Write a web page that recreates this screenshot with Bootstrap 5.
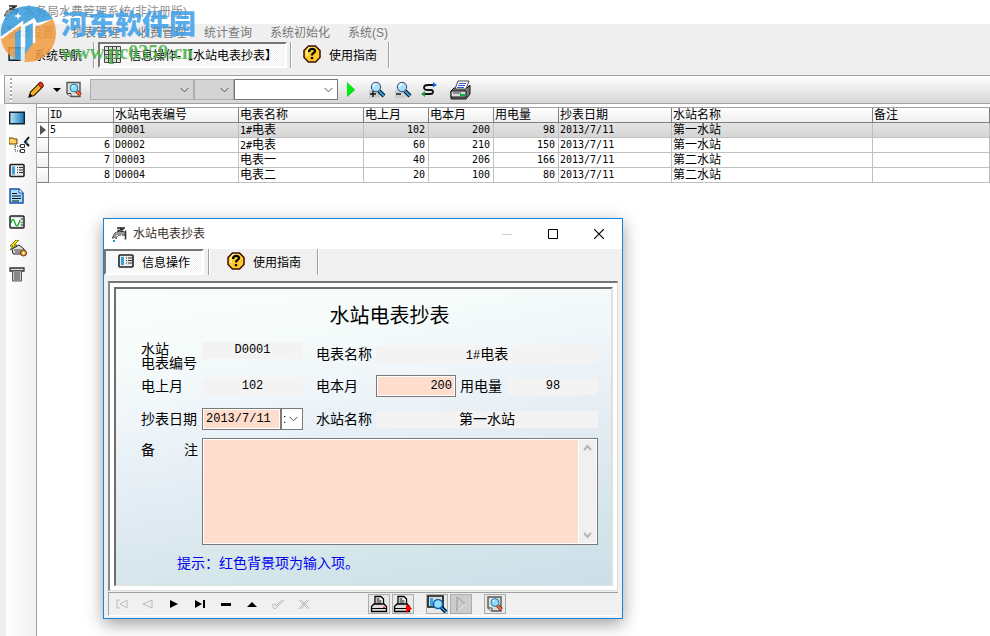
<!DOCTYPE html>
<html lang="zh-CN">
<head>
<meta charset="utf-8">
<meta name="viewport" content="width=device-width, initial-scale=1">
<title>水务局水费管理系统(非注册版)</title>
<link rel="stylesheet" href="https://cdn.jsdelivr.net/npm/bootstrap@5.3.0/dist/css/bootstrap.min.css">
<style>
body{font:12px/14px "Liberation Sans","Noto Sans CJK SC",sans-serif;color:#000;background:#fff;min-height:100vh;overflow:hidden}
button{font:inherit;color:inherit;background:none;border:0;padding:0}
svg{display:block;flex:none}
.num{font-family:"DejaVu Sans Mono","Noto Sans CJK SC",monospace;font-size:10px}
.titlebar{height:24px;padding:0 4px;gap:3px;color:#8f8f8f}
.menubar{height:18px;background:#efefef;padding-left:6px;gap:18px}
.menubar a{color:#777;text-decoration:none}
.tabs{height:33px;background:#efefef;gap:3px}
.tabs button,.dtabs button{height:26px;padding-top:2px;white-space:nowrap}
.vline{width:2px;height:26px;background:#a0a0a0;border-right:1px solid #fff}
.pressed{background:repeating-conic-gradient(#fff 0 25%,#f0f0f0 0 50%) 0 0/2px 2px;border-top:2px solid #777!important;border-left:2px solid #777!important;border-right:2px solid #fff!important;border-bottom:2px solid #fff!important}
.toolbar{height:29px;border-top:1px solid #a0a0a0;border-bottom:1px solid #a0a0a0;background:linear-gradient(#fff,#d6d6d6);margin-left:4px;padding-left:5px;border-left:1px solid #a0a0a0}
.grip{width:2px;height:24px;background:repeating-linear-gradient(#aaa 0 2px,#fff 2px 4px)}
.combo{height:21px;border:1px solid #adadad;border-radius:0;background:#d4d4d4 url("data:image/svg+xml,%3Csvg xmlns='http://www.w3.org/2000/svg' width='9' height='6'%3E%3Cpath d='M.5.8 4.5 4.8 8.5.8' fill='none' stroke='%23555'/%3E%3C/svg%3E") no-repeat right 4px center/9px 6px;padding:0;font-size:12px;appearance:none}
.combo-long{width:104px}.combo-short{width:40px}
.combo-on{background-color:#fff;border-color:#777}
.shell{background:#efefef;padding-left:6px;min-height:532px}
.side{flex:none;width:30px;background:linear-gradient(90deg,#fff,#f1f1f1);padding:6px 3px;gap:10px}
.side button{height:16px}
.gridpane{min-width:0;background:#fff;border-left:1px solid #a0a0a0;padding-top:3px}
.records{table-layout:fixed;border-collapse:separate;border-spacing:0;width:100%;line-height:14px;border-top:1px solid #a0a0a0}
.records th,.records td{padding:0 1px;height:15px;vertical-align:middle;font-weight:400;border-right:1px solid #c0c0c0;border-bottom:1px solid #c0c0c0;white-space:nowrap;overflow:hidden}
.records span.num{line-height:10px}
.records th{background:linear-gradient(#fff,#efefef);border-color:#808080}
.records td:first-child{background:linear-gradient(#fff,#efefef);border-color:#808080}
.records .r{text-align:right;padding-right:3px}
.records .current td{background:linear-gradient(#e4e4e4,#d5d5d5)}
.records .current td:nth-child(-n+2){background:#fff}
.c-mark{width:12px}.c-n{width:65px}.c-name{width:125px}.c-date{width:113px}.c-site{width:201px}
/* floating window */
.win{position:absolute;left:103px;top:218px;width:520px;border:1px solid #1883d7;background:#f0f0f0;box-shadow:0 5px 16px rgba(0,0,0,.38)}
.win-title{height:30px;background:#fff;padding-left:8px;gap:5px;color:#3b2f2a}
.win-title button{width:46px;height:28px}
.dtabs{height:32px}
.guide{margin-left:-3px}
.frame{margin:0 4px;background:#fff;border-top:2px solid #777;border-left:2px solid #888;border-right:1px solid #ddd;border-bottom:1px solid #ddd;padding:4px}
.sheet{border-top:2px solid #6e6e6e;border-left:2px solid #6e6e6e;border-right:2px solid #e0e0e0;border-bottom:1px solid #e0e0e0;background:linear-gradient(170deg,#f9fefb,#f6fcfa 18%,#eff5f9 36%,#e2ecf3 58%,#d5e6ea 80%,#cbdfe9);padding:15px 13px 14px 25px;font-size:14px;line-height:16px}
.sheet h1{font-size:20px;line-height:24px;font-weight:400;margin:0 0 14px;padding-left:40px}
.line{display:grid;grid-template-columns:61px 101px 13px 60px 1fr;align-items:center;min-height:22px}
.line label{white-space:nowrap}
.line-top{align-items:start;min-height:29px}
.line-date{margin-top:11px}
.stacked{line-height:14px}
.plate{height:17px;line-height:17px;background:#f3f3f3;text-align:center}
.f-num{font-family:"Liberation Mono","Noto Sans CJK SC",monospace;font-size:12px}
.entry{height:22px;border:1px solid #7a7a7a;border-radius:0;background:#ffddcc;box-shadow:inset 0 0 0 1px #fff;padding:0 3px;color:#000;min-width:0}
.entry-qty{width:80px}.plate-use{width:90px}
.combo-date{width:22px;height:22px;background-color:#fff;background-position:right 4px center;border-color:#7a7a7a;padding-left:1px}
.memo{grid-column:2/-1;height:107px;border:1px solid #7a7a7a;background:#fff;padding:1px}
.memo textarea{border:0;resize:none;background:#ffddcc;outline:0;overflow:hidden}
.memo-scroll{width:17px;background:#f0f0f0;margin-left:1px}
.tip{color:#0000f0;margin:10px 0 0 36px}
.navbar-db{margin:1px 4px 2px;height:24px;border-top:1px solid #a0a0a0;border-left:1px solid #a0a0a0;border-bottom:1px solid #fff}
.navbar-db .nb{width:26px;height:20px}
.navbar-db .tb{width:22px;height:20px;border:1px solid #adadad;background:#e9e9e9}
.navbar-db .dead{background:#ccc}
.tb-group{gap:2px}
.tb-first{margin-left:51px}
/* site badge laid over the window's corner */
.brand{position:absolute;left:0;top:5px;pointer-events:none}
.brand-cn{font:900 27px/28px "Noto Sans CJK SC",sans-serif;color:#3d9fe8;opacity:.85;white-space:nowrap}
.brand-url{font:bold 20px/22px "Liberation Serif",serif;color:#4fb04f;opacity:.88;margin-top:4px}
</style>
<script src="https://cdn.jsdelivr.net/npm/bootstrap@5.3.0/dist/js/bootstrap.bundle.min.js"></script>
</head>
<body>
<svg class="position-absolute" width="0" height="0" xmlns="http://www.w3.org/2000/svg" aria-hidden="true">
<defs><linearGradient id="sg"><stop stop-color="#bfe6f7"/><stop offset="1" stop-color="#1178b4"/></linearGradient></defs>
<symbol id="tap" viewBox="0 0 16 16"><path d="M5 1.500h8M9 2v4M5.500 4l6-1" stroke="#222" stroke-width="1.600" fill="none"/><path d="M2 12c.5-4 2-5.500 6-5.500h5" stroke="#999" stroke-width="3" fill="none"/><path d="M.7 12c.5-5 3-7 7-7h5M4 12.500C4.500 9.500 6 8.500 9 8.500h4" stroke="#222" fill="none" stroke-dasharray="3 1"/><path d="M13.500 4v9" stroke="#333" stroke-width="1.600"/><path d="M2 13.500v2" stroke="#39b" stroke-width="2"/></symbol>
<symbol id="help" viewBox="0 0 18 18"><path d="M5.500 1h7L17 5.500v7L12.500 17h-7L1 12.500v-7z" fill="#ffc72e" stroke="#3a1005" stroke-width="1.500"/><path d="M4 11V6l2-3h5" stroke="#fff3a0" stroke-width="1.500" fill="none"/><path d="M6 7c0-4 6-4 6-1 0 2-3 2-3 4.500" stroke="#000" stroke-width="2.200" fill="none"/><path d="M7.800 12h2.400v2.200H7.800z"/></symbol>
<symbol id="form" viewBox="0 0 16 14"><rect x="1" y="1" width="14" height="12" rx="1" fill="#e8e8e8" stroke="#222" stroke-width="1.600"/><path d="M3 3h3v8H3z" fill="#3b9fe0"/><path d="M8 4h1m1 0h4M8 6.500h1m1 0h4M8 9h1m1 0h4" stroke="#333"/><path d="M7 2v10" stroke="#fff"/></symbol>
<symbol id="screen" viewBox="0 0 16 13"><path d="M.7.700h14.600v11.600H.7z" fill="url(#sg)" stroke="#123" stroke-width="1.400"/></symbol>
<symbol id="lens" viewBox="0 0 18 18"><path d="m11 10 5 5" stroke="#012" stroke-width="4"/><path d="m11 10 5 5" stroke="#29a4df" stroke-width="2"/><circle cx="8" cy="6" r="4.700" fill="#a5e2fa" stroke="#347"/><path d="M5.500 6c0-2 1-3 3-3" stroke="#fff" stroke-width="1.500" fill="none"/></symbol>
<symbol id="preview" viewBox="0 0 16 17"><path d="M1 1h13v14H5l-4-3z" fill="#dce0dc" stroke="#555" stroke-width="1.400"/><path d="M1 12h4v3" fill="#fff" stroke="#444"/><path d="m10 9 4.500 4.500" stroke="#6b1b0a" stroke-width="3.600"/><path d="m10 9 4.500 4.500" stroke="#ff7034" stroke-width="2"/><circle cx="8" cy="6.500" r="3.900" fill="#8ddcfa" stroke="#2779a5"/><path d="M6 6q0-2 2-2" stroke="#fff" fill="none"/></symbol>
<symbol id="print-s" viewBox="0 0 18 18"><path d="M5 9V1.500h6L13.500 4v5" fill="#fff" stroke="#000" stroke-width="1.300"/><path d="M6.500 4h3m-3 2h5m-5 2h5" stroke="#000"/><path d="M1.500 11.500 4 9h10l2.500 2.500v5h-15z" fill="#ddd" stroke="#000" stroke-width="1.300"/><path d="M1.500 13.500h15" stroke="#000"/><path d="M13 12.300h2" stroke="red"/></symbol>
</svg>

<header class="titlebar d-flex align-items-center"><svg width="16" height="17"><use href="#tap"/></svg><span>水务局水费管理系统(非注册版)</span></header>
<nav class="menubar d-flex align-items-center" aria-label="主菜单"><a href="#">基础设置</a><a href="#">抄表管理</a><a href="#">收费管理</a><a href="#">统计查询</a><a href="#">系统初始化</a><a href="#">系统(S)</a></nav>
<div class="tabs d-flex align-items-start">
 <button class="d-flex align-items-center ps-2 pe-2"><svg class="me-2 mb-1" width="18" height="14"><use href="#screen"/></svg>系统导航</button>
 <span class="vline"></span>
 <button class="pressed d-flex align-items-center px-1"><svg class="me-2 mb-1" width="17" height="17" viewBox="0 0 17 17"><path d="M.500.500h16v16H.5zM4.500 0v17M8.500 0v17M12.500 0v17M0 4.500h17M0 8.500h17M0 12.500h17" fill="#ddd" stroke="#444"/></svg><span class="pe-1">信息操作-【水站电表抄表】</span></button>
 <span class="vline"></span>
 <button class="d-flex align-items-center ps-2 pe-2"><svg class="me-2 mb-1" width="18" height="18"><use href="#help"/></svg>使用指南</button>
 <span class="vline"></span>
</div>
<div class="toolbar d-flex align-items-center">
 <span class="grip me-3"></span>
 <button aria-label="编辑"><svg width="16" height="17" viewBox="0 0 16 17"><path d="M1 16 2.500 11 11 2.500 14.500 6 6 14.500z" fill="#ffc02d" stroke="#3b1b00" stroke-width="1.200"/><path d="m4 13 8-8" stroke="#e08a10"/><path d="m10 3 2-2q3 0 3.500 4l-2 2z" fill="#e6391c" stroke="#611"/><path d="m1 16 1.200-3.500L4.500 15z"/></svg></button>
 <button class="ms-2 me-1" aria-label="更多"><svg width="10" height="6"><path d="M1 1h8L5 5z"/></svg></button>
 <button class="me-2" aria-label="预览"><svg width="16" height="18"><use href="#preview"/></svg></button>
 <select class="combo combo-long" aria-label="字段"><option></option></select><select class="combo combo-short" aria-label="条件"><option></option></select><select class="combo combo-long combo-on" aria-label="值"><option></option></select>
 <button class="ms-2 me-2" aria-label="执行"><svg width="10" height="15"><path d="M1 0v15l8-7z" fill="#00cc10"/><path d="M1 1v13l8-6.500z" fill="#00ee10"/></svg></button>
 <button class="ms-1 me-2" aria-label="放大"><svg width="18" height="18"><path d="M1 9h11v8H1z" fill="#ccc"/><path d="M2 13h6M5 10v6" stroke="#111" stroke-width="1.400"/><use href="#lens"/></svg></button>
 <button class="me-2" aria-label="缩小"><svg width="18" height="18"><path d="M1 9h11v8H1z" fill="#ccc"/><path d="M2 13h5" stroke="#111" stroke-width="1.400"/><use href="#lens"/></svg></button>
 <button class="me-2" aria-label="刷新"><svg width="18" height="16" viewBox="0 0 18 16"><path d="M14 3H8Q4 3 4 5.500T8 8h3q2 0 2 2t-3 2H4" stroke="#111" stroke-width="1.800" fill="none"/><path d="M13 0v5.500L17 3z" fill="#176de4"/><path d="M5 9v6L1 12z" fill="#14a33a"/></svg></button>
 <button class="ms-1" aria-label="打印"><svg width="22" height="20" viewBox="0 0 22 20"><path d="m1 11 3-3h13l3-3v9l-4 5H1z" fill="#777" stroke="#111"/><path d="M5 9 8 1h11l-3 8z" fill="#fff" stroke="#444"/><path d="M9 3.500h7M8 5.500h7M7 7.500h7" stroke="#2e52dc"/><path d="M1 11h15v6H1z" fill="#d9d9d9" stroke="#111"/><path d="M3 13h8" stroke="#444"/><path d="M10 15h5" stroke="#0b3" stroke-width="2"/></svg></button>
</div>

<main class="shell d-flex">
 <aside class="side d-flex flex-column align-items-start" aria-label="快捷栏">
  <button aria-label="桌面"><svg width="16" height="14"><use href="#screen"/></svg></button>
  <button aria-label="结构"><svg width="21" height="17" viewBox="0 0 21 17"><path d="M0 2h4l1 1h3v5H0z" fill="#ffd261" stroke="#6b4300"/><path d="M6 9v6h5M6 10h5" stroke="#333" stroke-dasharray="1 1" fill="none"/><path d="M11.500 8.500h4v3h-4zM11.500 13.500h4v3h-4z" fill="#fff" stroke="#333"/><path d="m20 1-4 5 4 4" stroke="#111" stroke-width="2" fill="none"/><path d="M18 4v4" stroke="#2ac"/></svg></button>
  <button aria-label="表单"><svg width="16" height="15"><use href="#form"/></svg></button>
  <button aria-label="文档"><svg width="15" height="16" viewBox="0 0 15 16"><path d="M1 1h9l4 4v10H1z" fill="#a2ddff" stroke="#1753a0" stroke-width="1.500"/><path d="M10 1v4h4" fill="#fff" stroke="#1753a0"/><path d="M3 5.500h5M3 8h9M3 10.500h9M3 13h7" stroke="#111" stroke-width="1.200"/></svg></button>
  <button aria-label="曲线"><svg width="16" height="14" viewBox="0 0 16 14"><rect x="1" y="1" width="14" height="12" rx="1" fill="#ddd" stroke="#222" stroke-width="1.500"/><path d="M2 3h9v8H2z" fill="#fff"/><path d="M2 8q2-7 4 0t5-3" stroke="#08b020" stroke-width="1.300" fill="none"/><path d="M13 3v2m0 2v1m0 1v2" stroke="#333"/></svg></button>
  <button aria-label="设备"><svg width="19" height="17" viewBox="0 0 19 17"><path d="m3 9 7-4 5 4v5H4z" fill="#ddd" stroke="#222"/><path d="M5 10h8M6 12h6" stroke="#444"/><path d="M7 0 1 6h3L1 10l7-5H5l5-5z" fill="#ffe600" stroke="#443900" stroke-width=".7"/><circle cx="14.500" cy="13" r="3" fill="#eca33c" stroke="#5e3500"/><circle cx="14.500" cy="13" r="1" fill="#fff"/></svg></button>
  <button aria-label="报表"><svg width="16" height="15" viewBox="0 0 16 15"><path d="M1 1h14v3H1z" fill="#ddd" stroke="#333" stroke-width="1.300"/><path d="M3.500 4h9v10h-9z" fill="#ccc" stroke="#555"/><path d="M5 6h6M5 8h6M5 10h6M5 12h6" stroke="#444"/></svg></button>
 </aside>
 <section class="gridpane flex-grow-1 overflow-hidden">
  <table class="records">
   <colgroup><col class="c-mark"><col class="c-n"><col class="c-name"><col class="c-name"><col class="c-n"><col class="c-n"><col class="c-n"><col class="c-date"><col class="c-site"><col></colgroup>
   <thead><tr><th></th><th class="num">ID</th><th>水站电表编号</th><th>电表名称</th><th>电上月</th><th>电本月</th><th>用电量</th><th>抄表日期</th><th>水站名称</th><th>备注</th></tr></thead>
   <tbody>
    <tr class="current"><td><svg width="9" height="10"><path d="M2 0v10l6-5z" fill="#555"/></svg></td><td class="num">5</td><td class="num">D0001</td><td><span class="num">1#</span>电表</td><td class="num r">102</td><td class="num r">200</td><td class="num r">98</td><td class="num">2013/7/11</td><td>第一水站</td><td></td></tr>
    <tr><td></td><td class="num r">6</td><td class="num">D0002</td><td><span class="num">2#</span>电表</td><td class="num r">60</td><td class="num r">210</td><td class="num r">150</td><td class="num">2013/7/11</td><td>第一水站</td><td></td></tr>
    <tr><td></td><td class="num r">7</td><td class="num">D0003</td><td>电表一</td><td class="num r">40</td><td class="num r">206</td><td class="num r">166</td><td class="num">2013/7/11</td><td>第二水站</td><td></td></tr>
    <tr><td></td><td class="num r">8</td><td class="num">D0004</td><td>电表二</td><td class="num r">20</td><td class="num r">100</td><td class="num r">80</td><td class="num">2013/7/11</td><td>第二水站</td><td></td></tr>
   </tbody>
  </table>
 </section>
</main>

<section class="win" role="dialog" aria-labelledby="wt">
 <div class="win-title d-flex align-items-center"><svg width="16" height="17"><use href="#tap"/></svg><span id="wt" class="me-auto">水站电表抄表</span>
  <div class="d-flex">
  <button class="d-grid" aria-label="最小化"><svg class="m-auto" width="10" height="10"><path d="M0 5.500h10" stroke="#ccc"/></svg></button>
  <button class="d-grid" aria-label="最大化"><svg class="m-auto" width="10" height="10"><path d="M.500.500h9v9h-9z" fill="none" stroke="#000"/></svg></button>
  <button class="d-grid" aria-label="关闭"><svg class="m-auto" width="10" height="10"><path d="m0 0 10 10M10 0 0 10" stroke="#000" stroke-width="1.200"/></svg></button>
  </div>
 </div>
 <div class="dtabs d-flex align-items-start">
  <button class="pressed d-flex align-items-center ps-2 pe-2"><svg class="mx-1 mb-1" width="16" height="14"><use href="#form"/></svg><span class="ps-1 pe-1">信息操作</span></button>
  <span class="vline mx-1"></span>
  <button class="guide d-flex align-items-center px-3"><svg class="me-2 mb-1" width="18" height="18"><use href="#help"/></svg>使用指南</button>
  <span class="vline"></span>
 </div>
 <div class="frame"><form class="sheet">
  <h1 class="text-center">水站电表抄表</h1>
  <div class="line line-top">
   <label class="stacked" for="code">水站<br>电表编号</label><output id="code" class="plate f-num">D0001</output><span></span>
   <label class="mt-1" for="mname">电表名称</label><output id="mname" class="plate mt-1"><span class="f-num">1#</span>电表</output>
  </div>
  <div class="line mt-1">
   <label for="last">电上月</label><output id="last" class="plate f-num">102</output><span></span>
   <label for="cur">电本月</label>
   <div class="d-flex align-items-center gap-1"><input id="cur" class="entry entry-qty f-num text-end" value="200"><label for="use">用电量</label><output id="use" class="plate plate-use f-num ms-auto">98</output></div>
  </div>
  <div class="line line-date">
   <label for="date">抄表日期</label><div class="d-flex"><input id="date" class="entry f-num flex-grow-1 w-50" value="2013/7/11"><select class="combo combo-date" aria-label="选择日期"><option>:</option></select></div><span></span>
   <label for="site">水站名称</label><output id="site" class="plate">第一水站</output>
  </div>
  <div class="line align-items-start mt-2">
   <label class="d-flex justify-content-between pe-1 pt-1" for="memo"><span>备</span><span>注</span></label>
   <div class="memo d-flex"><textarea id="memo" class="flex-grow-1"></textarea><div class="memo-scroll d-flex flex-column justify-content-between align-items-center py-1"><svg width="9" height="8"><path d="m1 6 3.500-4L8 6" stroke="#b5b5b5" stroke-width="2" fill="none"/></svg><svg width="9" height="8"><path d="m1 2 3.500 4L8 2" stroke="#b5b5b5" stroke-width="2" fill="none"/></svg></div></div>
  </div>
  <p class="tip">提示：红色背景项为输入项。</p>
 </form></div>
 <div class="navbar-db d-flex align-items-center">
  <button class="nb" aria-label="首条"><svg class="m-auto" width="14" height="10"><path d="M5 1H2v8h3M12 1v8L5 5z" fill="none" stroke="#bbb"/></svg></button>
  <button class="nb" aria-label="上一条"><svg class="m-auto" width="12" height="10"><path d="M10 1v8L1 5z" fill="none" stroke="#bbb"/></svg></button>
  <button class="nb" aria-label="下一条"><svg class="m-auto" width="10" height="8"><path d="M1 0v8l8-4z"/></svg></button>
  <button class="nb" aria-label="末条"><svg class="m-auto" width="10" height="8"><path d="M0 0v8l7-4zM8 0h2v8H8z"/></svg></button>
  <button class="nb" aria-label="删除"><svg class="m-auto" width="10" height="3"><path d="M0 0h10v3H0z"/></svg></button>
  <button class="nb" aria-label="编辑"><svg class="m-auto" width="10" height="5"><path d="M0 5h10L5 0z"/></svg></button>
  <button class="nb" aria-label="确认"><svg class="m-auto" width="14" height="11"><path d="m1 7 3 3 9-9M1 6l3-1 1 2 6-6" stroke="#bbb" fill="none"/></svg></button>
  <button class="nb" aria-label="取消"><svg class="m-auto" width="12" height="11"><path d="m1 1 9 9M3 1l8 8M11 1l-8 9M9 1l-8 9" stroke="#bbb" fill="none"/></svg></button>
  <div class="d-flex tb-group tb-first me-2"><button class="tb" aria-label="打印"><svg class="m-auto" width="18" height="18"><use href="#print-s"/></svg></button><button class="tb" aria-label="直接打印"><svg class="m-auto" width="20" height="18"><use href="#print-s" width="18"/><path d="M13 9v9l6-4.500z" fill="red"/></svg></button></div>
  <div class="d-flex tb-group mx-1"><button class="tb" aria-label="查找"><svg class="m-auto" width="20" height="18" viewBox="0 0 20 18"><path d="M1 1h15v11H1z" fill="#ddd" stroke="#111" stroke-width="1.600"/><path d="M3 3h3v8H3z" fill="#37a6e5"/><path d="m14 12 5 5" stroke="#012" stroke-width="4"/><path d="m14 12 5 5" stroke="#39f" stroke-width="1.500"/><circle cx="11" cy="9" r="4.500" fill="#9cdcfb" stroke="#0764ad" stroke-width="1.500"/></svg></button><button class="tb dead" aria-label="继续"><svg class="m-auto" width="10" height="16"><path d="M1 1v14l8-7z" fill="none" stroke="#999"/><path d="M2 14.500 9.500 8" stroke="#fff"/></svg></button></div>
  <button class="tb ms-2" aria-label="预览"><svg class="m-auto" width="16" height="17"><use href="#preview"/></svg></button>
 </div>
</section>

<div class="brand d-flex gap-1">
 <svg width="57" height="58" viewBox="0 0 57 58"><g opacity=".85"><path d="M1 33C-1 14 11 1 28 1c12 0 21 5 25 13L37 18l-3-5L1 33z" fill="#369bdb"/><path d="M1 33 22 19v37Q3 51 1 33z" fill="#f29b3e"/><path d="M15 28l7-5v33l-7-3z" fill="#3b9fdc"/><path d="M53 14c9 20-3 43-26 43l-3-.3V40l8-3V24z" fill="#f29b3e"/><path d="M24 21l9-5v22l-9 13z" fill="#3b9fdc"/><path d="M1 33 22 18v38M24 56V21l10-5v22" stroke="#fff" stroke-width="2.500" fill="none"/></g><path d="m17 10 1-3 1 3 3 1-3 1-1 3-1-3-3-1z" fill="#fff"/></svg>
 <div><div class="brand-cn pt-1">河东软件园</div><div class="brand-url">www.pc0359.cn</div></div>
</div>
</body>
</html>
